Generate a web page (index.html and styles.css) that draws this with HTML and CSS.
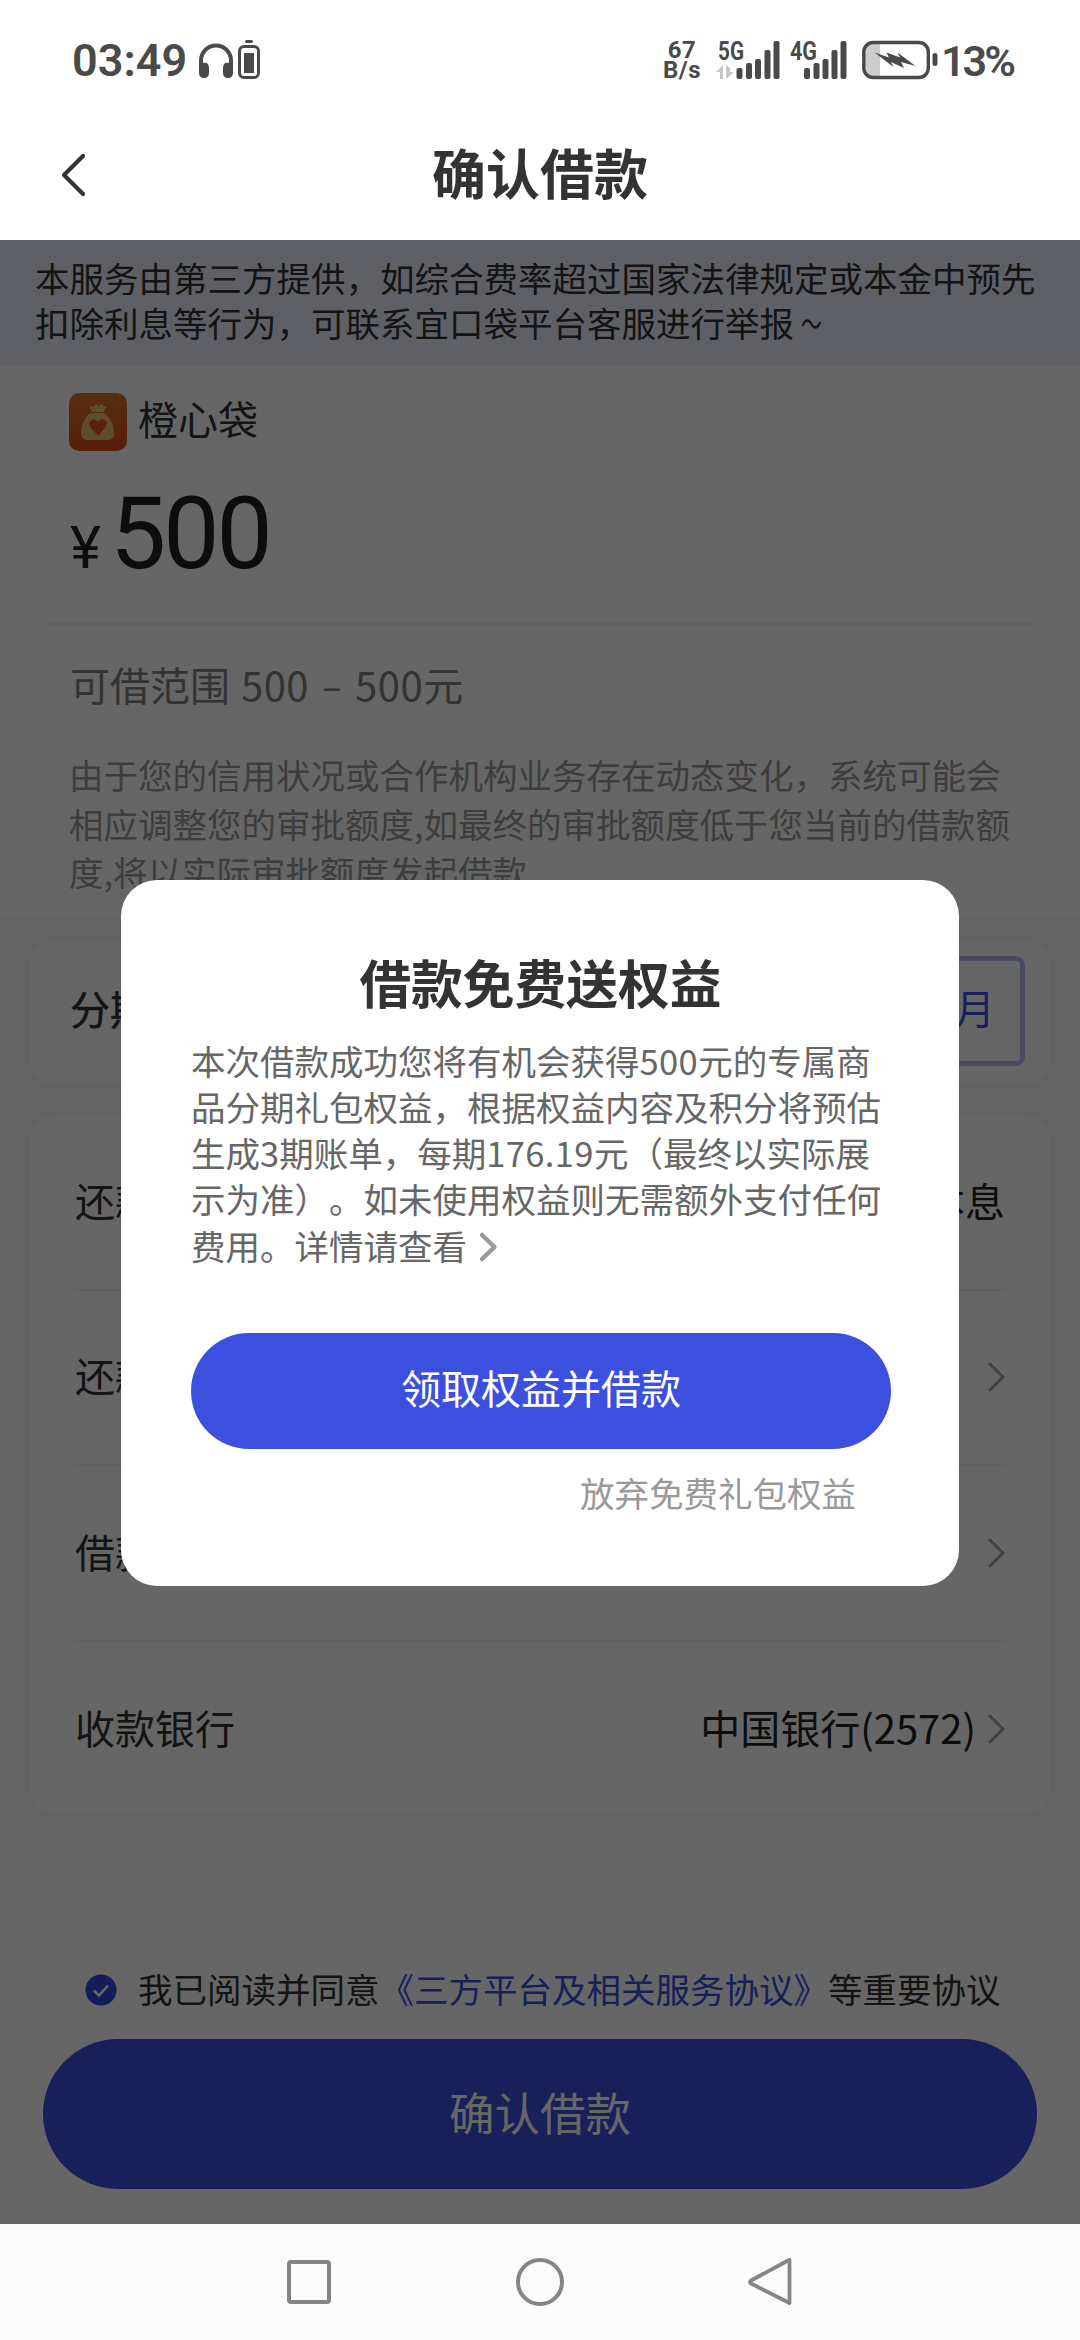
FILE: index.html
```html
<!DOCTYPE html>
<html lang="zh-CN">
<head>
<meta charset="utf-8">
<title>确认借款</title>
<link rel="stylesheet" href="styles.css">
</head>
<body>
<div class="phone">
  <header class="status">
    <div class="status-left">
      <span class="clock">03:49</span>
      <svg class="headphones" width="36" height="40" viewBox="0 0 36 40">
        <path d="M3 28V19.500a15 15 0 0 1 30 0V28" fill="none" stroke="#4a4a4a" stroke-width="4"/>
        <path d="M1 23q10-4 10 4v5q0 5-5 5t-5-5zM35 23q-10-4-10 4v5q0 5 5 5t5-5z" fill="#4a4a4a"/>
      </svg>
      <svg class="device" width="24" height="40" viewBox="0 0 24 40">
        <rect x="8" y="0" width="8" height="3" rx="1.500" fill="#4a4a4a"/>
        <rect x="2.500" y="6.500" width="19" height="31" rx="4.500" fill="none" stroke="#4a4a4a" stroke-width="3"/>
        <rect x="7" y="13" width="10" height="20" fill="#4a4a4a"/>
      </svg>
    </div>
    <div class="status-right">
      <div class="speed"><span>67</span><span>B/s</span></div>
      <svg class="signal" width="64" height="40" viewBox="0 0 64 40">
        <text x="2" y="20" class="net" textLength="26" lengthAdjust="spacingAndGlyphs">5G</text>
        <path d="M0 32L7 25V39H4V32zM10 25V39L18 32H14V28z" fill="#c6c6c6"/>
        <g fill="#4a4a4a"><rect x="20.500" y="28" width="6" height="11" rx="2"/><rect x="30" y="23" width="6" height="16" rx="2"/><rect x="39" y="19" width="6" height="20" rx="2"/><rect x="48.500" y="10" width="6" height="29" rx="2"/><rect x="57.500" y="1" width="6" height="38" rx="2"/></g>
      </svg>
      <svg class="signal" width="58" height="40" viewBox="0 0 58 40">
        <text x="0" y="20" class="net" textLength="27" lengthAdjust="spacingAndGlyphs">4G</text>
        <g fill="#4a4a4a"><rect x="14" y="28" width="6" height="11" rx="2"/><rect x="23.500" y="23" width="6" height="16" rx="2"/><rect x="32.500" y="19" width="6" height="20" rx="2"/><rect x="41.500" y="10" width="6" height="29" rx="2"/><rect x="50.500" y="1" width="6" height="38" rx="2"/></g>
      </svg>
      <svg class="battery" width="76" height="40" viewBox="0 0 76 40">
        <path d="M3 12q0-9 9-9h6v34h-6q-9 0-9-9z" fill="#ccc"/>
        <rect x="1.800" y="2.500" width="64.500" height="35" rx="9.500" fill="none" stroke="#4a4a4a" stroke-width="3.400"/>
        <rect x="70.500" y="13" width="5" height="13" rx="2.300" fill="#4a4a4a"/>
        <path d="M12.500 12.500L27 17.500L24.500 12.500L38 17.500L35.500 12.500L53.500 26L39 22L42 28L29 22L31.500 27Z" fill="#4a4a4a"/>
      </svg>
      <span class="percent">13%</span>
    </div>
  </header>

  <nav class="title-bar">
    <svg class="back" width="28" height="44" viewBox="0 0 28 44"><path d="M23 3L4 22L23 41" fill="none" stroke="#333" stroke-width="4.200" stroke-linecap="round" stroke-linejoin="round"/></svg>
    <h1>确认借款</h1>
  </nav>

  <main class="page">
    <p class="notice">本服务由第三方提供，如综合费率超过国家法律规定或本金中预先<br>扣除利息等行为，可联系宜口袋平台客服进行举报<span class="tilde">～</span></p>

    <section class="amount-card">
      <div class="brand">
        <svg width="58" height="58" viewBox="0 0 58 58">
          <defs><linearGradient id="orange" x1="0" y1="0" x2="0" y2="1"><stop offset="0" stop-color="#d87420"/><stop offset="1" stop-color="#de4c20"/></linearGradient></defs>
          <rect width="58" height="58" rx="10" fill="url(#orange)"/>
          <path d="M20 13l4 1l3-3l3 2l3-2l2 3l3-1l-3 6H23zM21 20H36Q45 29 45 40Q45 47 39 47H18Q12 47 12 40Q12 29 21 20Z" fill="#e6c46c"/>
          <path d="M29 43L21.500 34.500Q18 29 23 26.500Q27 25.500 29 29Q31 25.500 35 26.500Q40 29 36.500 34.500Z" fill="#e25022"/>
        </svg>
        <span>橙心袋</span>
      </div>
      <div class="amount"><span class="yen">¥</span><span class="sum">500</span></div>
      <div class="range">可借范围 <span class="num">500</span><span class="dash">–</span><span class="num">500</span>元</div>
      <p class="hint">由于您的信用状况或合作机构业务存在动态变化，系统可能会<br>相应调整您的审批额度,如最终的审批额度低于您当前的借款额<br>度,将以实际审批额度发起借款</p>
    </section>

    <section class="card term">
      <span>分期期限</span>
      <button class="chip">3个月</button>
    </section>

    <section class="card details">
      <div class="row"><span>还款方式</span><span class="value">等额本息</span></div>
      <div class="row"><span>还款计划</span><svg class="chev" width="18" height="32" viewBox="0 0 18 32"><path d="M2 2L16 16L2 30" fill="none" stroke="#a3a3a3" stroke-width="3"/></svg></div>
      <div class="row"><span>借款用途</span><svg class="chev" width="18" height="32" viewBox="0 0 18 32"><path d="M2 2L16 16L2 30" fill="none" stroke="#a3a3a3" stroke-width="3"/></svg></div>
      <div class="row"><span>收款银行</span><span class="value">中国银行(2572)</span><svg class="chev" width="18" height="32" viewBox="0 0 18 32"><path d="M2 2L16 16L2 30" fill="none" stroke="#a3a3a3" stroke-width="3"/></svg></div>
    </section>

    <footer class="footer">
      <div class="agree">
        <svg width="32" height="32" viewBox="0 0 32 32"><circle cx="16" cy="16" r="15.500" fill="#3049e0"/><path d="M9 16.500L14 21.500L23 11.500" fill="none" stroke="#fff" stroke-width="2.600"/></svg>
        <span>我已阅读并同意<a>《三方平台及相关服务协议》</a>等重要协议</span>
      </div>
      <button class="submit">确认借款</button>
    </footer>

    <div class="mask">
      <div class="dialog">
        <h2>借款免费送权益</h2>
        <p>本次借款成功您将有机会获得<span class="digits">500</span>元的专属商<br>品分期礼包权益，根据权益内容及积分将预估<br>生成3期账单，每期<span class="digits">176.19</span>元（最终以实际展<br>示为准）。如未使用权益则无需额外支付任何</p>
        <div class="more">费用。详情请查看<svg width="20" height="30" viewBox="0 0 20 30"><path d="M4 3L16.500 15L4 27" fill="none" stroke="#999" stroke-width="4.500" stroke-linecap="round" stroke-linejoin="round"/></svg></div>
        <button class="accept">领取权益并借款</button>
        <div class="decline">放弃免费礼包权益</div>
      </div>
    </div>
  </main>

  <div class="system-nav">
    <svg width="52" height="52" viewBox="0 0 52 52"><rect x="6" y="6" width="40" height="40" rx="2" fill="none" stroke="#858585" stroke-width="4"/></svg>
    <svg width="52" height="52" viewBox="0 0 52 52"><circle cx="26" cy="26" r="22" fill="none" stroke="#858585" stroke-width="4"/></svg>
    <svg width="52" height="52" viewBox="0 0 52 52"><path d="M44.500 4V47L6 27.500Q4 26 6 24.500L43 4.500Q44.500 4 44.500 6Z" fill="none" stroke="#858585" stroke-width="3.800" stroke-linejoin="round"/></svg>
  </div>
</div>
</body>
</html>
```

FILE: styles.css
```css
* { box-sizing: border-box; margin: 0; padding: 0; }
body {
  width: 1080px;
  font-family: "Noto Sans CJK SC", sans-serif;
  text-spacing-trim: space-all;
  color: #333;
  background: #fff;
}
button { border: 0; font: inherit; }
svg { flex: none; display: block; overflow: visible; }
.phone { display: flex; flex-direction: column; height: 2340px; overflow: hidden; white-space: nowrap; }

/* status bar */
.status { height: 120px; padding: 0 66px 0 72px; display: flex; justify-content: space-between; color: #4a4a4a; font-family: Roboto, sans-serif; }
.status-left, .status-right { display: flex; align-items: flex-start; padding-top: 40px; }
.clock { font-size: 45px; line-height: 42px; font-weight: 600; width: 126px; }
.headphones { margin-right: 3px; margin-top: 1px; }
.speed { width: 38px; margin-right: 15px; display: flex; flex-direction: column; align-items: center; font: 700 24px/20px Roboto, sans-serif; letter-spacing: .5px; }
.net { font: 700 26px Roboto, sans-serif; fill: #4a4a4a; }
.signal + .signal { margin-left: 10px; }
.battery { margin-left: 14px; }
.percent { font-size: 43px; line-height: 42px; font-weight: 600; margin-left: 3px; width: 73px; letter-spacing: -3px; }

/* title bar */
.title-bar { height: 120px; display: grid; grid-template-columns: 96px 1fr 96px; align-items: center; }
.back { margin: -10px 0 0 60px; }
.title-bar h1 { font-size: 54px; line-height: 60px; font-weight: 700; text-align: center; margin-top: -16px; }

/* page */
.page { position: relative; height: 1984px; background: #f7f7f7; display: flex; flex-direction: column; }
.notice { height: 125px; padding: 15px 35px; font-size: 34.500px; line-height: 45px; background: #edeffe; }
.tilde { display: inline-block; transform: scaleX(.6); }
.amount-card { height: 552px; padding: 28px 48px 0; background: #fff; }
.brand { display: flex; align-items: center; gap: 11px; height: 58px; padding-left: 21px; font-size: 40px; line-height: 58px; }
.brand span { margin-top: -8px; }
.amount { height: 174px; padding: 27px 0 0 21px; display: flex; align-items: baseline; color: #222; border-bottom: 2px solid #f3f3f3; font-family: Roboto, sans-serif; }
.yen { font-size: 59px; line-height: 100px; width: 40px; margin-left: 1px; }
.sum { font-size: 100px; line-height: 112px; letter-spacing: -3px; }
.range { height: 120px; padding-left: 22px; font-size: 40px; line-height: 118px; color: #808080; }
.num { letter-spacing: .5px; }
.range .num:first-child { margin-left: 2px; }
.dash { display: inline-block; width: 46px; text-align: center; transform: scaleX(.9); }
.hint { padding-left: 21px; font-size: 34.500px; line-height: 48.700px; color: #999; margin-top: 5px; }

.card { margin: 0 30px; background: #fff; border-radius: 24px; }
.term { height: 142px; margin-top: 25px; padding: 0 25px 11px 40px; display: flex; align-items: center; justify-content: space-between; font-size: 40px; }
.term > span { -webkit-text-stroke: .5px #333; }
.chip { width: 230px; height: 110px; margin-top: 6px; padding: 0 25px 8px 0; border: 5px solid #b5b9f0; border-radius: 9px; background: #fff; color: #3c50e0; text-align: right; }
.details { height: 699px; margin-top: 31px; padding: 0 45px; }
.row { height: 175.500px; display: flex; align-items: center; font-size: 40px; border-bottom: 2px solid #f3f3f3; }
.row:last-child { border-bottom: 0; }
.row > span { margin-top: -4px; }
.row > span:first-child { flex: 1; }
.value { color: #222; }
.chev { margin-left: 11px; }

/* bottom action area */
.footer { margin-top: auto; height: 281px; padding: 20px 43px 35px; background: #fff; }
.agree { height: 76px; padding-left: 42px; display: flex; align-items: flex-start; gap: 21px; font-size: 34.500px; line-height: 50px; }
.agree svg { margin-top: 11px; }
.agree a { color: #3c50e0; }
.submit { display: block; width: 994px; height: 150px; border-radius: 75px; background: #3c50e0; color: #fff; font-size: 45.500px; padding-bottom: 7px; }

/* dialog */
.mask { position: absolute; inset: 0; display: flex; justify-content: center; align-items: flex-start; padding-top: 640px; background: rgba(0, 0, 0, .6); }
.dialog { width: 838px; height: 706px; padding: 72px 69px 0 70px; border-radius: 36px; background: #fff; color: #666; font-size: 34.500px; }
.dialog h2 { font-size: 51.750px; line-height: 60px; font-weight: 700; color: #333; text-align: center; }
.dialog p { margin-top: 25px; line-height: 46px; }
.digits { letter-spacing: .4px; }
.more { display: flex; align-items: center; gap: 11px; height: 48px; line-height: 48px; }
.more svg { margin-top: 3px; }
.accept { display: block; width: 700px; height: 116px; margin-top: 64px; border-radius: 58px; background: #3c50e0; color: #fff; font-size: 40px; padding-bottom: 8px; }
.decline { margin-top: 20px; padding-right: 34px; text-align: right; line-height: 46px; color: #999; }

/* system navigation */
.system-nav { flex: 1; display: flex; justify-content: center; align-items: flex-start; gap: 179px; padding-top: 32px; background: #fbfbfb; }
```
